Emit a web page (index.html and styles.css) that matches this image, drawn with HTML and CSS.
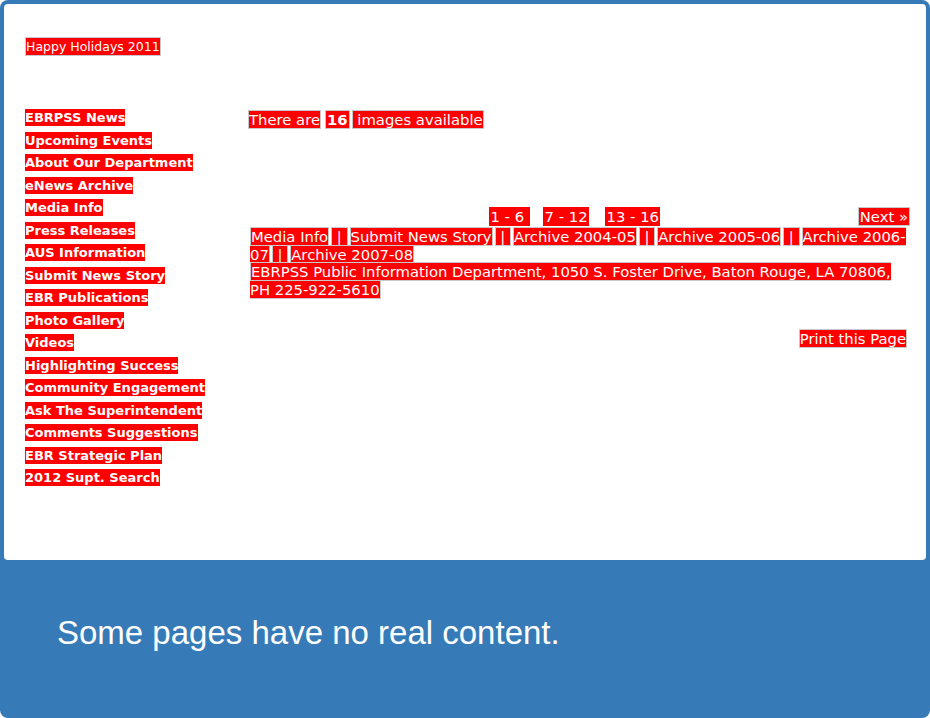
FILE: index.html
```html
<!DOCTYPE html>
<html>
<head>
<meta charset="utf-8">
<link rel="stylesheet" href="styles.css">
</head>
<body>
<div class="frame">
  <div class="sheet">
    <div class="holiday"><a class="box hol">Happy Holidays 2011</a></div>
    <div class="cols">
      <nav class="nav">
        <div class="nav-row"><a class="nav-link">EBRPSS News</a></div>
        <div class="nav-row"><a class="nav-link">Upcoming Events</a></div>
        <div class="nav-row"><a class="nav-link">About Our Department</a></div>
        <div class="nav-row"><a class="nav-link">eNews Archive</a></div>
        <div class="nav-row"><a class="nav-link">Media Info</a></div>
        <div class="nav-row"><a class="nav-link">Press Releases</a></div>
        <div class="nav-row"><a class="nav-link">AUS Information</a></div>
        <div class="nav-row"><a class="nav-link">Submit News Story</a></div>
        <div class="nav-row"><a class="nav-link">EBR Publications</a></div>
        <div class="nav-row"><a class="nav-link">Photo Gallery</a></div>
        <div class="nav-row"><a class="nav-link">Videos</a></div>
        <div class="nav-row"><a class="nav-link">Highlighting Success</a></div>
        <div class="nav-row"><a class="nav-link">Community Engagement</a></div>
        <div class="nav-row"><a class="nav-link">Ask The Superintendent</a></div>
        <div class="nav-row"><a class="nav-link">Comments Suggestions</a></div>
        <div class="nav-row"><a class="nav-link">EBR Strategic Plan</a></div>
        <div class="nav-row"><a class="nav-link">2012 Supt. Search</a></div>
      </nav>
      <main class="main">
        <div class="count"><span class="box c1">There are</span><span class="box strong c2">16</span><span class="box c3">&nbsp;images available</span></div>
        <div class="pager">
          <div class="pages"><a class="pg p1">1 - 6</a><a class="pg p2">7 - 12</a><a class="pg p3">13 - 16</a></div>
          <a class="box next">Next »</a>
        </div>
        <div class="links"><a class="box lk">Media Info</a><span class="box lk"> | </span><a class="box lk">Submit News Story</a><span class="box lk"> | </span><a class="box lk">Archive 2004-05</a><span class="box lk"> | </span><a class="box lk">Archive 2005-06</a><span class="box lk"> | </span><a class="box lk">Archive 2006-<wbr>07</a><span class="box lk"> | </span><a class="box lk">Archive 2007-08</a></div>
        <div class="address"><span class="box">EBRPSS Public Information Department, 1050 S. Foster Drive, Baton Rouge, LA 70806, PH 225-922-5610</span></div>
        <div class="print"><a class="box">Print this Page</a></div>
      </main>
    </div>
  </div>
  <div class="caption">Some pages have no real content.</div>
</div>
</body>
</html>
```
FILE: styles.css
```css
html, body {
  margin: 0;
  padding: 0;
  background: #ffffff;
}
.frame {
  width: 930px;
  height: 718px;
  background: #367bb7;
  border-radius: 8px;
  box-sizing: border-box;
  padding: 4px 4px 0 4px;
  display: flex;
  flex-direction: column;
}
.sheet {
  background: #ffffff;
  height: 556px;
  border-radius: 4px;
  box-sizing: border-box;
  padding: 34px 16px 0 21px;
  font-family: Verdana, "DejaVu Sans", sans-serif;
  font-size: 13px;
  color: #ffffff;
}
.box {
  background: #ff0000;
  border: 1px solid #c8c8c8;
  color: #ffffff;
}
.holiday {
  line-height: 17px;
  height: 17px;
  font-size: 12.5px;
}
.hol {
  padding: 1px 0;
}
.cols {
  display: flex;
  margin-top: 54px;
}
.nav {
  width: 223px;
  flex: none;
  display: flex;
  flex-direction: column;
}
.nav-row {
  height: 22.5px;
  line-height: 17px;
}
.nav-link {
  background: #ff0000;
  color: #ffffff;
  font-weight: bold;
  padding: 1px 0;
}
.main {
  flex: 1;
  padding-top: 1px;
  font-size: 14.8px;
}
.strong {
  font-weight: bold;
}
.count {
  line-height: 19px;
}
.c1 {
  margin-right: 4px;
}
.c2 {
  padding: 0 1px;
  margin-right: 2px;
}
.pager {
  display: flex;
  justify-content: space-between;
  align-items: center;
  margin-top: 78px;
  padding-left: 241px;
  height: 19px;
}
.pages {
  display: flex;
}
.pg {
  background: #ff0000;
  color: #ffffff;
  padding: 1px 1.5px;
  line-height: 17px;
}
.p1 {
  padding-right: 6px;
  margin-right: 13px;
}
.p2 {
  margin-right: 16px;
}
.next {
  padding: 0 1px;
  line-height: 17px;
}
.links {
  line-height: 17.5px;
  margin-left: 2px;
  margin-top: 2px;
}
.lk {
  margin-right: 2px;
}
.address {
  line-height: 17.5px;
  margin-left: 2px;
}
.print {
  text-align: right;
  margin-top: 31px;
  line-height: 19px;
  padding-right: 3px;
}
.caption {
  flex: 1;
  display: flex;
  align-items: center;
  padding-left: 53px;
  padding-bottom: 12px;
  font-family: "Liberation Sans", Arial, sans-serif;
  font-size: 33px;
  color: #ffffff;
}
```
